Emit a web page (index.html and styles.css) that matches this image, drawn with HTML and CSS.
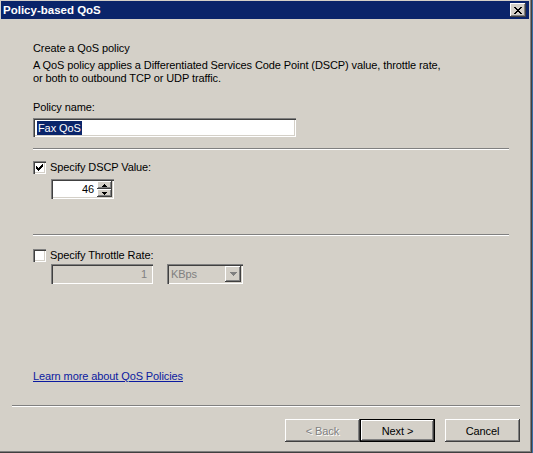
FILE: index.html
```html
<!DOCTYPE html>
<html lang="en">
<head>
<meta charset="utf-8">
<title>Policy-based QoS</title>
<link rel="stylesheet" href="styles.css">
</head>
<body>
<div class="window">
  <div class="titlebar">
    <span class="title">Policy-based QoS</span>
    <span class="close" aria-label="Close">
      <svg width="8" height="7" viewBox="0 0 8 7"><path d="M0 0h2v1h1v1h2V1h1V0h2v1H7v1H6v1H5v1h1v1h1v1h1v1H6V6H5V5H3v1H2v1H0V6h1V5h1V4h1V3H2V2H1V1H0z" fill="#000"/></svg>
    </span>
  </div>

  <div class="content">
    <div class="page">
      <p class="heading">Create a QoS policy</p>
      <p class="desc">A QoS policy applies a Differentiated Services Code Point (DSCP) value, throttle rate,<br>or both to outbound TCP or UDP traffic.</p>

      <p class="field-label">Policy name:</p>
      <div class="field name-field"><span class="selected">Fax QoS</span></div>

      <div class="etched sep-dscp"></div>

      <div class="check-row dscp-row">
        <span class="checkbox">
          <svg width="7" height="7" viewBox="0 0 7 7"><path d="M0 2h1v1h1v1h1V3h1V2h1V1h1V0h1v3H6v1H5v1H4v1H3v1H2V6H1V5H0z" fill="#000"/></svg>
        </span>
        <span class="check-label">Specify DSCP Value:</span>
      </div>
      <div class="field spinner">
        <span class="spin-value">46</span>
        <span class="spin-buttons">
          <span class="spin-btn"><svg width="5" height="3" viewBox="0 0 5 3"><path d="M2 0h1v1h1v1h1v1H0V2h1V1h1z" fill="#000"/></svg></span>
          <span class="spin-btn"><svg width="5" height="3" viewBox="0 0 5 3"><path d="M0 0h5v1H4v1H3v1H2V2H1V1H0z" fill="#000"/></svg></span>
        </span>
      </div>

      <div class="etched sep-throttle"></div>

      <div class="check-row throttle-row">
        <span class="checkbox"></span>
        <span class="check-label">Specify Throttle Rate:</span>
      </div>
      <div class="throttle-inputs">
        <div class="field disabled rate-field">1</div>
        <div class="field disabled combo">
          <span class="combo-text">KBps</span>
          <span class="combo-btn"><svg width="7" height="4" viewBox="0 0 7 4"><path d="M0 0h7v1H6v1H5v1H4v1H3V3H2V2H1V1H0z" fill="#808080"/></svg></span>
        </div>
      </div>

      <a class="help-link" href="#">Learn more about QoS Policies</a>
    </div>

    <div class="footer">
      <div class="etched"></div>
      <div class="buttons">
        <span class="btn disabled-btn">&lt; Back</span>
        <span class="btn default-btn">Next &gt;</span>
        <span class="btn cancel-btn">Cancel</span>
      </div>
    </div>
  </div>
</div>
</body>
</html>
```

FILE: styles.css
```css
* {
  box-sizing: border-box;
}

html,
body {
  margin: 0;
  padding: 0;
}

body {
  width: 533px;
  height: 453px;
  overflow: hidden;
  background: #3a6ea5;
  font-family: "Liberation Sans", Arial, sans-serif;
  font-size: 11px;
  letter-spacing: -0.1px;
  color: #000;
}

p {
  margin: 0;
}

/* dialog frame */
.window {
  width: 532px;
  height: 453px;
  background: #d4d0c8;
  border-right: 1px solid #404040;
  border-bottom: 1px solid #404040;
  box-shadow: inset -1px -1px 0 #808080;
  padding: 1px 0 0 1px;
  display: flex;
  flex-direction: column;
}

.titlebar {
  height: 18px;
  margin-right: 2px;
  background: #0a246a;
  display: flex;
  align-items: center;
  justify-content: space-between;
  padding: 0 3px 0 2px;
}

.title {
  color: #fff;
  font-weight: bold;
  font-size: 11.5px;
  letter-spacing: 0;
}

.close {
  width: 16px;
  height: 14px;
  background: #d4d0c8;
  box-shadow: inset -1px -1px 0 #404040, inset 1px 1px 0 #fff, inset -2px -2px 0 #808080;
  display: flex;
  align-items: center;
  justify-content: center;
}

svg {
  display: block;
  shape-rendering: crispEdges;
}

.content {
  flex: 1;
  display: flex;
  flex-direction: column;
}

.page {
  padding: 23px 22px 0 32px;
  line-height: 13px;
  display: flex;
  flex-direction: column;
  align-items: flex-start;
}

.desc {
  margin-top: 4px;
}

.field-label {
  margin-top: 16px;
}

/* sunken edit boxes */
.field {
  background: #fff;
  box-shadow: inset 1px 1px 0 #808080, inset 2px 2px 0 #404040, inset -1px -1px 0 #fff, inset -2px -2px 0 #d4d0c8;
  display: flex;
  align-items: center;
}

.field.disabled {
  background: #d4d0c8;
  color: #808080;
}

.name-field {
  margin-top: 4px;
  width: 263px;
  height: 19px;
  padding-left: 4px;
}

.selected {
  background: #0a246a;
  color: #fff;
  line-height: 14px;
  padding: 0 1px;
}

.etched {
  align-self: stretch;
  height: 2px;
  border-top: 1px solid #808080;
  border-bottom: 1px solid #fff;
}

.sep-dscp {
  margin-top: 11px;
}

.sep-throttle {
  margin-top: 35px;
}

.check-row {
  display: flex;
  align-items: center;
  gap: 4px;
  height: 13px;
}

.dscp-row {
  margin-top: 11px;
}

.throttle-row {
  margin-top: 13px;
}

.checkbox {
  width: 13px;
  height: 13px;
  background: #fff;
  box-shadow: inset 1px 1px 0 #808080, inset 2px 2px 0 #404040, inset -1px -1px 0 #fff, inset -2px -2px 0 #d4d0c8;
  display: flex;
  align-items: center;
  justify-content: center;
}

.spinner {
  margin-top: 5px;
  margin-left: 18px;
  width: 63px;
  height: 20px;
  padding: 2px 2px 2px 4px;
}

.spin-value {
  flex: 1;
  text-align: right;
  padding-right: 3px;
}

.spin-buttons {
  display: flex;
  flex-direction: column;
  width: 15px;
  height: 16px;
}

.spin-btn {
  flex: 1;
  background: #d4d0c8;
  box-shadow: inset -1px -1px 0 #404040, inset 1px 1px 0 #fff, inset -2px -2px 0 #808080;
  display: flex;
  align-items: center;
  justify-content: center;
}

.throttle-inputs {
  margin-top: 2px;
  margin-left: 18px;
  display: flex;
  gap: 14px;
}

.rate-field {
  width: 102px;
  height: 20px;
  justify-content: flex-end;
  padding-right: 6px;
}

.combo {
  width: 76px;
  height: 20px;
  padding: 2px;
}

.combo-text {
  flex: 1;
  padding-left: 2px;
}

.combo-btn {
  width: 16px;
  height: 16px;
  background: #d4d0c8;
  box-shadow: inset -1px -1px 0 #404040, inset 1px 1px 0 #fff, inset -2px -2px 0 #808080;
  display: flex;
  align-items: center;
  justify-content: center;
}

.help-link {
  margin-top: 86px;
  color: #0b1aa0;
  text-decoration: underline;
}

/* wizard footer */
.footer {
  margin-top: 22px;
  padding: 0 11px;
  display: flex;
  flex-direction: column;
}

.buttons {
  margin-top: 12px;
  display: flex;
  justify-content: flex-end;
}

.btn {
  width: 75px;
  height: 23px;
  background: #d4d0c8;
  box-shadow: inset -1px -1px 0 #404040, inset 1px 1px 0 #fff, inset -2px -2px 0 #808080;
  display: flex;
  align-items: center;
  justify-content: center;
}

.disabled-btn {
  color: #808080;
  text-shadow: 1px 1px 0 #fff;
}

.default-btn {
  border: 1px solid #000;
}

.cancel-btn {
  margin-left: 10px;
}
```
